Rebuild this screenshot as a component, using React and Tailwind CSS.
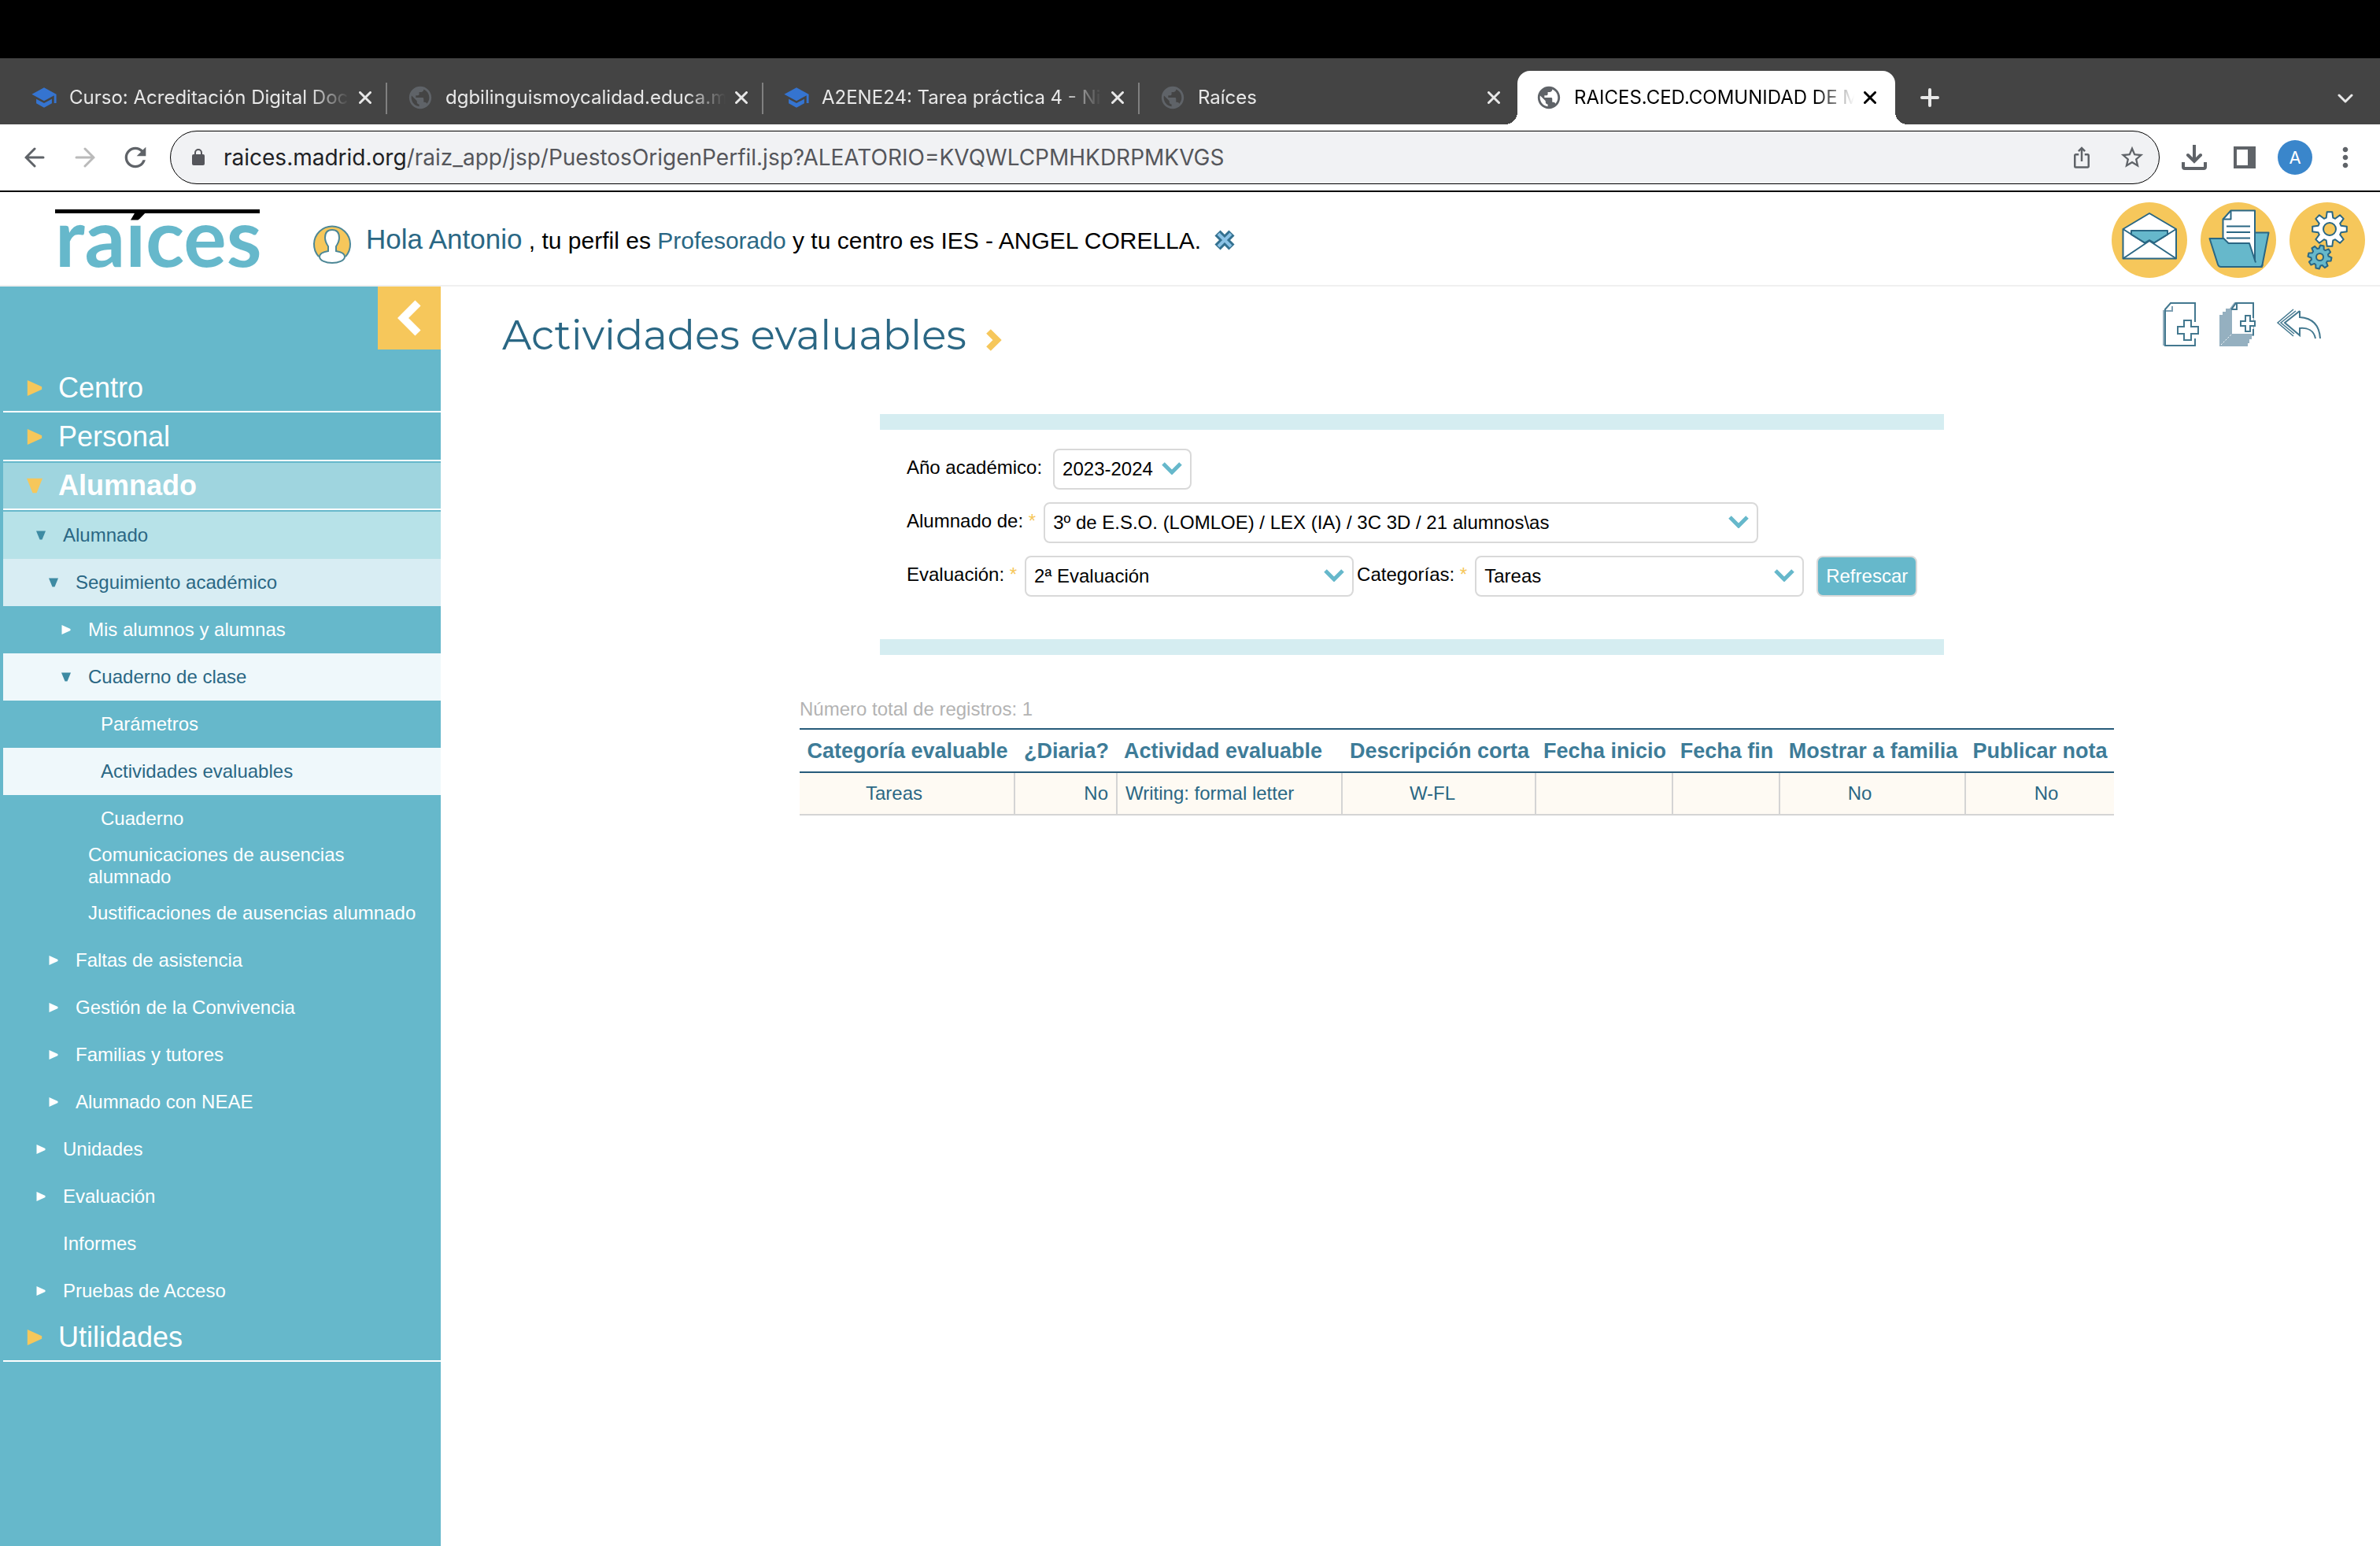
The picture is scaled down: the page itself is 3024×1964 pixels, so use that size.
import React, { useState } from 'react';
import { MdSchool, MdPublic, MdRefresh, MdIosShare, MdStarBorder, MdMoreVert } from 'react-icons/md';

const tabs = [
  { title: 'Curso: Acreditación Digital Docente', icon: 'school' },
  { title: 'dgbilinguismoycalidad.educa.madrid.org', icon: 'globe' },
  { title: 'A2ENE24: Tarea práctica 4 - Nivel', icon: 'school' },
  { title: 'Raíces', icon: 'globe' },
  { title: 'RAICES.CED.COMUNIDAD DE MADRID', icon: 'globe', active: true },
];

const menu = [
  { label: 'Centro', level: 0, state: 'closed' },
  { label: 'Personal', level: 0, state: 'closed' },
  { label: 'Alumnado', level: 0, state: 'open' },
  { label: 'Alumnado', level: 1, state: 'open', bg: 'bg-[#b7e2e8]' },
  { label: 'Seguimiento académico', level: 2, state: 'open', bg: 'bg-[#d8edf3]' },
  { label: 'Mis alumnos y alumnas', level: 3, state: 'closed' },
  { label: 'Cuaderno de clase', level: 3, state: 'open', bg: 'bg-[#eff8fb]' },
  { label: 'Parámetros', level: 4 },
  { label: 'Actividades evaluables', level: 4, bg: 'bg-[#eff8fb]' },
  { label: 'Cuaderno', level: 4 },
  { label: 'Comunicaciones de ausencias alumnado', level: 3 },
  { label: 'Justificaciones de ausencias alumnado', level: 3 },
  { label: 'Faltas de asistencia', level: 2, state: 'closed' },
  { label: 'Gestión de la Convivencia', level: 2, state: 'closed' },
  { label: 'Familias y tutores', level: 2, state: 'closed' },
  { label: 'Alumnado con NEAE', level: 2, state: 'closed' },
  { label: 'Unidades', level: 1, state: 'closed' },
  { label: 'Evaluación', level: 1, state: 'closed' },
  { label: 'Informes', level: 1 },
  { label: 'Pruebas de Acceso', level: 1, state: 'closed' },
  { label: 'Utilidades', level: 0, state: 'closed' },
];

const indent = {
  1: 'pl-[42px]',
  2: 'pl-[58px]',
  3: 'pl-[74px]',
  4: 'pl-[90px]',
};

const columns = [
  { title: 'Categoría evaluable', width: 'w-[274px]', head: 'text-center', cell: 'text-center pr-8', value: 'Tareas' },
  { title: '¿Diaria?', width: 'w-[130px]', head: 'text-center', cell: 'text-right pr-[10px]', value: 'No' },
  { title: 'Actividad evaluable', width: 'w-[286px]', head: 'text-left pl-2', cell: 'text-left pl-[10px]', value: 'Writing: formal letter' },
  { title: 'Descripción corta', width: 'w-[246px]', head: 'text-center', cell: 'text-center pr-4', value: 'W-FL' },
  { title: 'Fecha inicio', width: 'w-[174px]', head: 'text-center', cell: 'text-center', value: '' },
  { title: 'Fecha fin', width: 'w-[136px]', head: 'text-center', cell: 'text-center', value: '' },
  { title: 'Mostrar a familia', width: 'w-[236px]', head: 'text-center', cell: 'text-center pr-8', value: 'No' },
  { title: 'Publicar nota', width: 'w-[188px]', head: 'text-center', cell: 'text-center pl-4', value: 'No' },
];

function gearPath(cx, cy, outer, inner, turn) {
  const teeth = 8;
  const step = (Math.PI * 2) / teeth;
  const points = [];
  for (let i = 0; i < teeth; i++) {
    const a = i * step - Math.PI / 2 + turn;
    [
      [inner, -0.29],
      [outer, -0.15],
      [outer, 0.15],
      [inner, 0.29],
    ].forEach(([r, d]) => {
      points.push(`${(cx + r * Math.cos(a + d)).toFixed(1)} ${(cy + r * Math.sin(a + d)).toFixed(1)}`);
    });
  }
  return `M${points.join('L')}Z`;
}

function CloseIcon() {
  return (
    <svg viewBox="0 0 16 16" className="size-4" fill="none" stroke="currentColor" strokeWidth="3" strokeLinecap="round">
      <path d="M1.5 1.5l13 13M14.5 1.5l-13 13" />
    </svg>
  );
}

function BrowserTab({ tab }) {
  const Icon = tab.icon === 'school' ? MdSchool : MdPublic;
  const iconColor = tab.icon === 'school' ? 'text-[#3574d0]' : 'text-[#5f6368]';
  return (
    <div
      className={`relative flex h-[68px] min-w-0 max-w-[480px] flex-1 items-center pl-6 pr-6 ${
        tab.active ? 'rounded-t-2xl bg-white text-black' : 'text-[#e8e8e8]'
      }`}
    >
      {tab.active && (
        <>
          <span className="absolute bottom-0 -left-4 size-4 bg-[radial-gradient(circle_at_0_0,#444444_16px,#ffffff_16px)]" />
          <span className="absolute bottom-0 -right-4 size-4 bg-[radial-gradient(circle_at_100%_0,#444444_16px,#ffffff_16px)]" />
        </>
      )}
      <span className="flex w-8 shrink-0 justify-center">
        <Icon className={`size-[34px] shrink-0 ${iconColor}`} />
      </span>
      <span className="ml-4 min-w-0 flex-1 overflow-hidden whitespace-nowrap text-2xl [mask-image:linear-gradient(to_right,black_calc(100%-50px),transparent)]">
        {tab.title}
      </span>
      <button type="button" aria-label="Cerrar pestaña" className="ml-3 shrink-0">
        <CloseIcon />
      </button>
    </div>
  );
}

function TabStrip() {
  return (
    <div className="flex h-[84px] items-end bg-[#444444] pl-4 pr-[34px] font-[Inter,sans-serif]">
      {tabs.map((tab, i) => (
        <React.Fragment key={tab.title}>
          {i > 0 && (
            <span className={`mb-[13px] -ml-1 mr-0.5 h-10 w-0.5 shrink-0 ${i < 4 ? 'bg-[#808080]' : 'bg-transparent'}`} />
          )}
          <div className="-mr-0.5 flex min-w-0 max-w-[480px] flex-1">
            <BrowserTab tab={tab} />
          </div>
        </React.Fragment>
      ))}
      <button type="button" aria-label="Nueva pestaña" className="mb-[22px] ml-[34px] shrink-0 text-[#e8e8e8]">
        <svg viewBox="0 0 24 24" className="size-6" stroke="currentColor" strokeWidth="4" strokeLinecap="round">
          <path d="M12 2v20M2 12h20" />
        </svg>
      </button>
      <button type="button" aria-label="Buscar pestañas" className="mb-[27px] ml-auto shrink-0 text-[#e8e8e8]">
        <svg viewBox="0 0 20 12" className="h-3 w-5" fill="none" stroke="currentColor" strokeWidth="3" strokeLinecap="round" strokeLinejoin="round">
          <path d="M2 2l8 8 8-8" />
        </svg>
      </button>
    </div>
  );
}

function ToolButton({ label, children }) {
  return (
    <button type="button" aria-label={label} className="flex size-16 shrink-0 items-center justify-center text-[#5f6368]">
      {children}
    </button>
  );
}

function AddressBar() {
  return (
    <div className="flex h-[86px] items-center border-b-2 border-black bg-white px-3 font-[Inter,sans-serif]">
      <ToolButton label="Atrás">
        <svg viewBox="0 0 26 26" className="size-[26px]" fill="none" stroke="currentColor" strokeWidth="3" strokeLinecap="round">
          <path d="M24 13H2M13 2L2 13l11 11" />
        </svg>
      </ToolButton>
      <ToolButton label="Adelante">
        <svg viewBox="0 0 26 26" className="size-[26px]" fill="none" stroke="#bababa" strokeWidth="3" strokeLinecap="round">
          <path d="M2 13h22M13 2l11 11-11 11" />
        </svg>
      </ToolButton>
      <ToolButton label="Recargar">
        <MdRefresh className="size-10" />
      </ToolButton>
      <div className="ml-3 flex h-[68px] min-w-0 flex-1 items-center rounded-full border border-black bg-[#f1f2f4] pl-[27px] pr-0.5">
        <svg viewBox="0 0 16 22" className="h-[22px] w-4 shrink-0" fill="none">
          <rect x="0" y="7" width="16" height="14" rx="2" fill="#55565b" />
          <path d="M4 8V5a4 4 0 018 0v3" stroke="#55565b" strokeWidth="2" />
        </svg>
        <span className="ml-6 min-w-0 flex-1 truncate text-[28px] text-[#55565b]">
          <span className="text-[#202124]">raices.madrid.org</span>
          /raiz_app/jsp/PuestosOrigenPerfil.jsp?ALEATORIO=KVQWLCPMHKDRPMKVGS
        </span>
        <ToolButton label="Compartir">
          <MdIosShare className="size-[30px]" />
        </ToolButton>
        <ToolButton label="Añadir a marcadores">
          <MdStarBorder className="size-[34px]" />
        </ToolButton>
      </div>
      <div className="ml-3 flex">
        <ToolButton label="Descargas">
          <svg viewBox="0 0 32 32" className="size-8" fill="none" stroke="currentColor" strokeWidth="4">
            <path d="M16 0v21" />
            <path d="M8 13l8 8 8-8" strokeLinecap="round" />
            <path d="M2 22v6a2 2 0 002 2h24a2 2 0 002-2v-6" />
          </svg>
        </ToolButton>
        <ToolButton label="Panel lateral">
          <svg viewBox="0 0 28 28" className="size-7">
            <path d="M0 0h28v28H0zM4 4v20h14V4z" fill="currentColor" fillRule="evenodd" />
          </svg>
        </ToolButton>
        <ToolButton label="Perfil">
          <span className="flex size-11 items-center justify-center rounded-full bg-[#3a86cb] text-[22px] text-white">A</span>
        </ToolButton>
        <ToolButton label="Más opciones">
          <MdMoreVert className="size-10" />
        </ToolButton>
      </div>
    </div>
  );
}

function UserIcon() {
  return (
    <svg viewBox="0 0 50 50" className="mt-[10px] size-[50px] shrink-0" stroke="#4d8796" strokeWidth="2">
      <path d="M8 41A23 23 0 1142 41" fill="#f6c75b" />
      <path d="M25 7c-6 0-9 4-9 10 0 5 2 8 4 11v6c-6 1-11 3-11 7 0 5 8 8 16 8s16-3 16-8c0-4-5-6-11-7v-6c2-3 4-6 4-11 0-6-3-10-9-10z" fill="#fff" />
    </svg>
  );
}

function MailIcon() {
  return (
    <svg viewBox="0 0 96 96" className="size-24" stroke="#2a6784" strokeWidth="2" strokeLinejoin="round">
      <circle cx="48" cy="48" r="48" fill="#f6c75b" stroke="none" />
      <path d="M14.500 34L48 14l34 20v37.500H14.500z" fill="#fff" />
      <path d="M25 36h46v5L54 51.500 48 48l-6 3.500L25 41z" fill="#66b8cb" />
      <path d="M14.500 34L42 51.500M82 34L54 51.500M14.500 71.500L48 49l34 22.500" fill="none" />
    </svg>
  );
}

function FolderIcon() {
  return (
    <svg viewBox="0 0 96 96" className="size-24" stroke="#2a6784" strokeWidth="2" strokeLinejoin="round">
      <circle cx="48" cy="48" r="48" fill="#f6c75b" stroke="none" />
      <path d="M69 38.500h17.500L78 82H40z" fill="#66b8cb" />
      <path d="M38.500 10.500H69V75L60 56H28.500V21.500z" fill="#fff" />
      <path d="M38.500 10.500v11h-10M33 30.500h30M33 38h30M33 45.500h30" fill="none" />
      <path d="M11.500 46h18l6 6H62l8 24.500L76 82H23z" fill="#66b8cb" stroke="none" />
      <path d="M70 76.500L62 52H35.500l-6-6h-18L22 79q1 3 4 3h49q3 0 4-3" fill="none" />
    </svg>
  );
}

function GearsIcon() {
  return (
    <svg viewBox="0 0 96 96" className="size-24" stroke="#2a6784" strokeWidth="2" strokeLinejoin="round">
      <circle cx="48" cy="48" r="48" fill="#f6c75b" stroke="none" />
      <path d={gearPath(51, 34, 22, 15, 0)} fill="#fff" />
      <circle cx="51" cy="34" r="8" fill="#f6c75b" />
      <path d={gearPath(38.5, 69.5, 15, 11, 0.2)} fill="#66b8cb" />
      <circle cx="38.500" cy="69.500" r="4.500" fill="#f6c75b" />
    </svg>
  );
}

function AppHeader() {
  return (
    <header className="flex h-[120px] items-center border-b-2 border-[#f0f0f0] bg-white pl-[70px] pr-[19px] pt-1">
      <a href="#inicio" className="h-[78px] w-[260px] overflow-hidden border-t-[5px] border-black">
        <span className="block bg-[linear-gradient(to_bottom,#000000_12px,#66b8cb_12px)] bg-clip-text pb-5 font-[Lato,sans-serif] text-[102px] font-bold leading-[57px] text-transparent">
          raíces
        </span>
      </a>
      <div className="ml-[67px] flex flex-1 items-center">
        <UserIcon />
        <p className="ml-[18px] text-[30px] leading-10 text-black">
          <a href="#usuario" className="text-[35px] text-[#2a6784]">Hola Antonio</a> , tu perfil es{' '}
          <a href="#perfil" className="text-[#2a6784]">Profesorado</a> y tu centro es IES - ANGEL CORELLA.
        </p>
        <button type="button" aria-label="Cerrar sesión" className="ml-4">
          <svg viewBox="0 0 28 28" className="size-7" fill="none">
            <path d="M5 5l18 18M23 5L5 23" stroke="#33708f" strokeWidth="10" />
            <path d="M6 6l16 16M22 6L6 22" stroke="#8cc3e6" strokeWidth="4" />
          </svg>
        </button>
      </div>
      <div className="flex gap-[17px]">
        <button type="button" aria-label="Mensajes"><MailIcon /></button>
        <button type="button" aria-label="Documentos"><FolderIcon /></button>
        <button type="button" aria-label="Configuración"><GearsIcon /></button>
      </div>
    </header>
  );
}

function Arrow({ state, className }) {
  if (!state) return <span className={className} />;
  return (
    <svg viewBox="0 0 12 12" className={className} fill="currentColor">
      {state === 'open' ? <path d="M0 0.500h12L7.500 11.500h-3z" /> : <path d="M0.500 0L11.500 5v2L0.500 12z" />}
    </svg>
  );
}

function MenuItem({ item }) {
  if (item.level === 0) {
    const open = item.state === 'open';
    return (
      <li className="pb-0.5">
        <a
          href="#menu"
          className={`flex h-[60px] items-center border-b-2 border-white pl-[30px] text-4xl text-white ${
            open ? 'bg-[#9fd5df] font-bold' : ''
          }`}
        >
          <Arrow state={item.state} className="mr-5 size-5 shrink-0 text-[#f6c75b]" />
          {item.label}
        </a>
      </li>
    );
  }
  return (
    <li>
      <a
        href="#menu"
        className={`flex h-[60px] items-center pr-4 text-2xl leading-7 ${indent[item.level]} ${
          item.bg ? `${item.bg} text-[#2a6784]` : 'text-white'
        }`}
      >
        <Arrow state={item.state} className={`mr-[22px] size-3 shrink-0 ${item.bg ? 'text-[#3e8ba3]' : 'text-white'}`} />
        <span>{item.label}</span>
      </a>
    </li>
  );
}

function Sidebar() {
  return (
    <aside className="w-[560px] shrink-0 bg-[#66b8cb] pl-1">
      <div className="flex justify-end">
        <button type="button" aria-label="Ocultar menú" className="flex size-20 items-center justify-center bg-[#f6c75b]">
          <svg viewBox="0 0 30 46" className="h-[46px] w-[30px]" fill="none" stroke="#fff" strokeWidth="10">
            <path d="M26 4L7 23l19 19" />
          </svg>
        </button>
      </div>
      <nav className="mt-5">
        <ul>
          {menu.map((item, i) => (
            <MenuItem key={i} item={item} />
          ))}
        </ul>
      </nav>
    </aside>
  );
}

function Field({ id, label, required, width, options }) {
  const [value, setValue] = useState(options[0]);
  return (
    <div className="flex items-center">
      <label htmlFor={id} className={`pb-1 ${required ? 'mr-[10px]' : 'mr-[14px]'}`}>
        {label}
        {required && <span className="text-[#f6c75b]"> *</span>}
      </label>
      <div className={`relative ${width}`}>
        <select
          id={id}
          value={value}
          onChange={(e) => setValue(e.target.value)}
          className="h-[52px] w-full appearance-none rounded-lg border-2 border-[#d9d9d9] bg-white pl-[10px] text-black"
        >
          {options.map((o) => (
            <option key={o}>{o}</option>
          ))}
        </select>
        <svg viewBox="0 0 26 16" className="pointer-events-none absolute right-3 top-[17px] h-4 w-[26px]" fill="none" stroke="#66b8cb" strokeWidth="5">
          <path d="M2 2l11 11L24 2" />
        </svg>
      </div>
    </div>
  );
}

function Filters() {
  return (
    <div className="flex justify-center pl-1">
      <form className="flex w-full max-w-[1352px] flex-col gap-4 border-y-[20px] border-[#d5edf1] pb-[54px] pl-[34px] pt-6 text-2xl text-black">
        <Field id="anio" label="Año académico:" width="w-[176px]" options={['2023-2024']} />
        <Field id="alumnado" label="Alumnado de:" required width="w-[908px]" options={['3º de E.S.O. (LOMLOE) / LEX (IA) / 3C 3D / 21 alumnos\\as']} />
        <div className="flex items-center">
          <Field id="evaluacion" label="Evaluación:" required width="w-[418px]" options={['2ª Evaluación']} />
          <div className="ml-1">
            <Field id="categorias" label="Categorías:" required width="w-[418px]" options={['Tareas']} />
          </div>
          <button type="button" className="ml-4 h-[52px] rounded-lg border-2 border-[#d9d9d9] bg-[#66b8cb] px-[10px] text-white">
            Refrescar
          </button>
        </div>
      </form>
    </div>
  );
}

function ActionIcons() {
  return (
    <div className="flex items-center gap-[26px]">
      <button type="button" aria-label="Nueva actividad">
        <svg viewBox="0 0 46 56" className="h-14 w-[46px]" fill="none" stroke="#43788f" strokeWidth="2">
          <path d="M2 10v45" stroke="#95b0c0" strokeWidth="4" />
          <path d="M41 25V1H10L3 9v46h38v-9" />
          <path d="M12 5v6H4" stroke="#7d9fb2" />
          <path d="M27 23h9v8h9v9h-9v8h-9v-8h-8v-9h8z" />
        </svg>
      </button>
      <button type="button" aria-label="Copiar actividades">
        <svg viewBox="0 0 46 56" className="h-14 w-[46px]" fill="none">
          <path d="M0 16h4v-4h4V8h5l6-8h25v43h-3v4h-3v5h-2v4H0z" fill="#95b0c0" />
          <path d="M16 10l5-8h22v38H16z" fill="#fff" />
          <path d="M2 54l14-14" stroke="#fff" strokeWidth="1" strokeDasharray="2 2" />
          <path d="M15 9l6-8h22v19M43 34v8M22 2v7h-7" stroke="#43788f" strokeWidth="2" />
          <path d="M33 17h6v7h6v6h-6v7h-6v-7h-6v-6h6z" fill="#fff" stroke="#43788f" strokeWidth="2" />
        </svg>
      </button>
      <button type="button" aria-label="Volver">
        <svg viewBox="0 0 58 40" className="h-10 w-[58px]" fill="none" stroke="#43788f" strokeWidth="2">
          <path d="M22 1L2 18l20 17M25 3L6 18l17 14" strokeWidth="1.500" />
          <path d="M30 3L11 18l19 16V25c10-1 18 3 20 13M56 38C55 21 46 12 30 11V3" />
        </svg>
      </button>
    </div>
  );
}

function ActivitiesTable() {
  return (
    <div className="mt-[53px] flex justify-center pl-[118px]">
      <div>
        <p className="mb-2 text-2xl leading-8 text-[#b3b3b3]">Número total de registros: 1</p>
        <table className="table-fixed border-separate border-spacing-0">
          <thead>
            <tr>
              {columns.map((c) => (
                <th
                  key={c.title}
                  className={`${c.width} ${c.head} h-[57px] whitespace-nowrap border-y-2 border-[#275b7a] text-[27px] leading-8 text-[#3e7c98]`}
                >
                  {c.title}
                </th>
              ))}
            </tr>
          </thead>
          <tbody>
            <tr className="bg-[#fefaf3]">
              {columns.map((c, i) => (
                <td
                  key={c.title}
                  className={`${c.cell} h-[54px] border-b-2 border-[#d4d4d4] text-2xl leading-8 text-[#2a6784] ${
                    i < columns.length - 1 ? 'border-r-2' : ''
                  }`}
                >
                  {c.value}
                </td>
              ))}
            </tr>
          </tbody>
        </table>
      </div>
    </div>
  );
}

export default function App() {
  return (
    <div className="flex min-h-screen flex-col bg-white font-['Liberation_Sans',Arial,sans-serif]">
      <div className="h-[74px] bg-black" />
      <TabStrip />
      <AddressBar />
      <AppHeader />
      <div className="flex flex-1">
        <Sidebar />
        <main className="min-w-0 flex-1">
          <div className="flex h-[162px] items-start justify-between pl-[78px] pr-[74px] pt-5">
            <h1 className="mt-[14px] flex items-center gap-6 font-[Montserrat,Inter,sans-serif] text-[52px] leading-[56px] text-[#2a6784]">
              Actividades evaluables
              <svg viewBox="0 0 22 28" className="mt-3 h-7 w-[22px]" fill="none" stroke="#f6c75b" strokeWidth="8">
                <path d="M4 3l11 11L4 25" />
              </svg>
            </h1>
            <ActionIcons />
          </div>
          <Filters />
          <ActivitiesTable />
        </main>
      </div>
    </div>
  );
}
